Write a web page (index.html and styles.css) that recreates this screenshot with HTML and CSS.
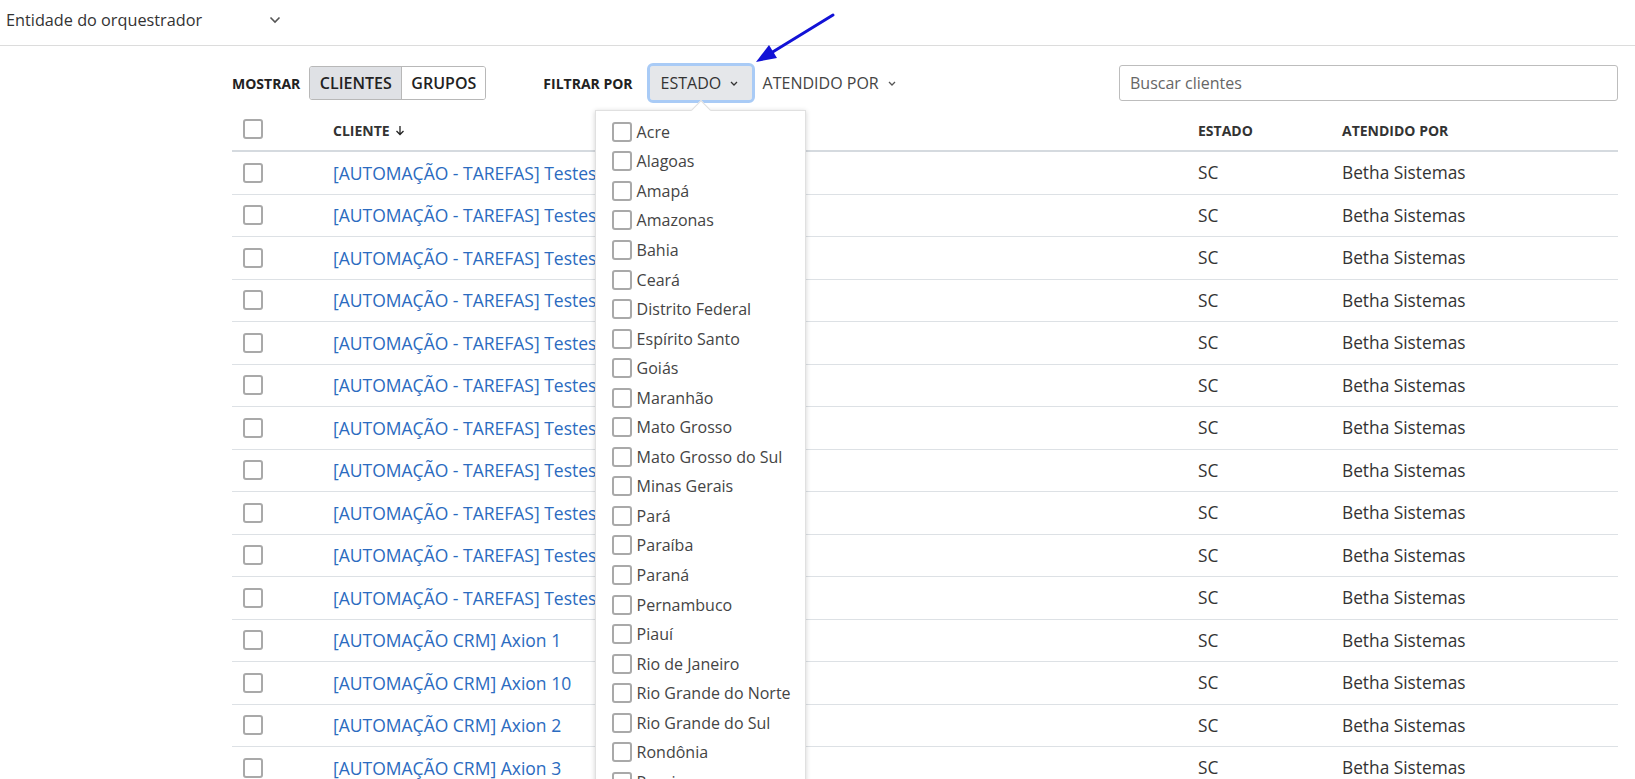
FILE: index.html
```html
<!DOCTYPE html>
<html lang="pt-BR">
<head>
<meta charset="utf-8">
<title>Clientes</title>
<link rel="stylesheet" href="styles.css">
</head>
<body>
<header class="topbar">
  <div class="entity">
    <span>Entidade do orquestrador</span>
    <svg class="chev-lg" width="12" height="8" viewBox="0 0 12 8"><path d="M1.5 1.5 L6 6 L10.5 1.5" fill="none" stroke="#555" stroke-width="1.6"/></svg>
  </div>
</header>
<main class="content">
  <div class="toolbar">
    <span class="label">MOSTRAR</span>
    <div class="seg">
      <button class="seg-btn active">CLIENTES</button>
      <button class="seg-btn second">GRUPOS</button>
    </div>
    <span class="label filter-label">FILTRAR POR</span>
    <div class="filter-wrap">
      <button class="filter open">ESTADO
        <svg width="8" height="5" viewBox="0 0 8 5"><path d="M1 1 L4 4 L7 1" fill="none" stroke="#333" stroke-width="1.3"/></svg>
      </button>
      <div class="dropdown">
        <div class="caret"></div>
        <ul class="opts">
          <li><span class="cb"></span>Acre</li>
          <li><span class="cb"></span>Alagoas</li>
          <li><span class="cb"></span>Amapá</li>
          <li><span class="cb"></span>Amazonas</li>
          <li><span class="cb"></span>Bahia</li>
          <li><span class="cb"></span>Ceará</li>
          <li><span class="cb"></span>Distrito Federal</li>
          <li><span class="cb"></span>Espírito Santo</li>
          <li><span class="cb"></span>Goiás</li>
          <li><span class="cb"></span>Maranhão</li>
          <li><span class="cb"></span>Mato Grosso</li>
          <li><span class="cb"></span>Mato Grosso do Sul</li>
          <li><span class="cb"></span>Minas Gerais</li>
          <li><span class="cb"></span>Pará</li>
          <li><span class="cb"></span>Paraíba</li>
          <li><span class="cb"></span>Paraná</li>
          <li><span class="cb"></span>Pernambuco</li>
          <li><span class="cb"></span>Piauí</li>
          <li><span class="cb"></span>Rio de Janeiro</li>
          <li><span class="cb"></span>Rio Grande do Norte</li>
          <li><span class="cb"></span>Rio Grande do Sul</li>
          <li><span class="cb"></span>Rondônia</li>
          <li><span class="cb"></span>Roraima</li>
          <li><span class="cb"></span>Santa Catarina</li>
          <li><span class="cb"></span>São Paulo</li>
          <li><span class="cb"></span>Sergipe</li>
          <li><span class="cb"></span>Tocantins</li>
        </ul>
      </div>
    </div>
    <button class="filter">ATENDIDO POR
      <svg width="8" height="5" viewBox="0 0 8 5"><path d="M1 1 L4 4 L7 1" fill="none" stroke="#555" stroke-width="1.3"/></svg>
    </button>
    <input class="search" type="text" placeholder="Buscar clientes">
  </div>

  <div class="table">
    <div class="row head">
      <div class="cell"><span class="cb"></span></div>
      <div class="cell th">CLIENTE
        <svg width="10" height="11" viewBox="0 0 10 11"><path d="M5 1 V9.5 M1.5 6 L5 9.5 L8.5 6" fill="none" stroke="#222" stroke-width="1.3"/></svg>
      </div>
      <div class="cell th">ESTADO</div>
      <div class="cell th">ATENDIDO POR</div>
    </div>
    <div class="row"><div class="cell"><span class="cb"></span></div><div class="cell"><a href="#">[AUTOMAÇÃO - TAREFAS] Testes 01</a></div><div class="cell">SC</div><div class="cell">Betha Sistemas</div></div>
    <div class="row"><div class="cell"><span class="cb"></span></div><div class="cell"><a href="#">[AUTOMAÇÃO - TAREFAS] Testes 02</a></div><div class="cell">SC</div><div class="cell">Betha Sistemas</div></div>
    <div class="row"><div class="cell"><span class="cb"></span></div><div class="cell"><a href="#">[AUTOMAÇÃO - TAREFAS] Testes 03</a></div><div class="cell">SC</div><div class="cell">Betha Sistemas</div></div>
    <div class="row"><div class="cell"><span class="cb"></span></div><div class="cell"><a href="#">[AUTOMAÇÃO - TAREFAS] Testes 04</a></div><div class="cell">SC</div><div class="cell">Betha Sistemas</div></div>
    <div class="row"><div class="cell"><span class="cb"></span></div><div class="cell"><a href="#">[AUTOMAÇÃO - TAREFAS] Testes 05</a></div><div class="cell">SC</div><div class="cell">Betha Sistemas</div></div>
    <div class="row"><div class="cell"><span class="cb"></span></div><div class="cell"><a href="#">[AUTOMAÇÃO - TAREFAS] Testes 06</a></div><div class="cell">SC</div><div class="cell">Betha Sistemas</div></div>
    <div class="row"><div class="cell"><span class="cb"></span></div><div class="cell"><a href="#">[AUTOMAÇÃO - TAREFAS] Testes 07</a></div><div class="cell">SC</div><div class="cell">Betha Sistemas</div></div>
    <div class="row"><div class="cell"><span class="cb"></span></div><div class="cell"><a href="#">[AUTOMAÇÃO - TAREFAS] Testes 08</a></div><div class="cell">SC</div><div class="cell">Betha Sistemas</div></div>
    <div class="row"><div class="cell"><span class="cb"></span></div><div class="cell"><a href="#">[AUTOMAÇÃO - TAREFAS] Testes 09</a></div><div class="cell">SC</div><div class="cell">Betha Sistemas</div></div>
    <div class="row"><div class="cell"><span class="cb"></span></div><div class="cell"><a href="#">[AUTOMAÇÃO - TAREFAS] Testes 10</a></div><div class="cell">SC</div><div class="cell">Betha Sistemas</div></div>
    <div class="row"><div class="cell"><span class="cb"></span></div><div class="cell"><a href="#">[AUTOMAÇÃO - TAREFAS] Testes 11</a></div><div class="cell">SC</div><div class="cell">Betha Sistemas</div></div>
    <div class="row"><div class="cell"><span class="cb"></span></div><div class="cell"><a href="#">[AUTOMAÇÃO CRM] Axion 1</a></div><div class="cell">SC</div><div class="cell">Betha Sistemas</div></div>
    <div class="row"><div class="cell"><span class="cb"></span></div><div class="cell"><a href="#">[AUTOMAÇÃO CRM] Axion 10</a></div><div class="cell">SC</div><div class="cell">Betha Sistemas</div></div>
    <div class="row"><div class="cell"><span class="cb"></span></div><div class="cell"><a href="#">[AUTOMAÇÃO CRM] Axion 2</a></div><div class="cell">SC</div><div class="cell">Betha Sistemas</div></div>
    <div class="row"><div class="cell"><span class="cb"></span></div><div class="cell"><a href="#">[AUTOMAÇÃO CRM] Axion 3</a></div><div class="cell">SC</div><div class="cell">Betha Sistemas</div></div>
    <div class="row"><div class="cell"><span class="cb"></span></div><div class="cell"><a href="#">[AUTOMAÇÃO CRM] Axion 4</a></div><div class="cell">SC</div><div class="cell">Betha Sistemas</div></div>
  </div>
</main>

<svg class="annotation" width="110" height="80" viewBox="740 0 110 80">
  <line x1="833" y1="15" x2="771" y2="53" stroke="#1212d6" stroke-width="3" stroke-linecap="round"/>
  <polygon points="756,62 777,58 769,45" fill="#1212d6"/>
</svg>
</body>
</html>
```

FILE: styles.css
```css
html, body {
  margin: 0;
  padding: 0;
  overflow: hidden;
  height: 100%;
}
body {
  font-family: "Open Sans", "Liberation Sans", sans-serif;
  color: #333;
  background: #fff;
  position: relative;
}

.topbar {
  height: 40px;
  padding-bottom: 5px;
  border-bottom: 1px solid #dcdcdc;
  display: flex;
  align-items: center;
  padding-left: 6px;
}
.entity {
  display: flex;
  align-items: center;
  font-size: 16.25px;
  color: #333;
}
.chev-lg {
  margin-left: 67px;
}

.content {
  padding: 0 17px 0 232px;
}

.toolbar {
  display: flex;
  align-items: center;
  height: 36px;
  margin-top: 19px;
}
.label {
  font-size: 14px;
  font-weight: 700;
  color: #222;
}
.filter-label {
  margin-left: 57px;
}
.seg {
  display: flex;
  margin-left: 9px;
  border: 1px solid #b8b8b8;
  border-radius: 3px;
  height: 34px;
  box-sizing: border-box;
  overflow: hidden;
}
.seg-btn {
  font-family: inherit;
  font-size: 16px;
  font-weight: 600;
  color: #222;
  border: 0;
  background: #fff;
  padding: 0;
  margin: 0;
  box-sizing: border-box;
  text-align: center;
}
.seg-btn.active {
  background: #dfe1e5;
  border-right: 1px solid #b8b8b8;
  width: 92px;
}
.seg-btn.second {
  width: 83px;
}
.filter-wrap {
  position: relative;
  margin-left: 17px;
}
.filter {
  font-family: inherit;
  font-size: 16px;
  color: #444;
  background: transparent;
  border: 0;
  height: 34px;
  padding: 0 11px;
  display: flex;
  align-items: center;
  gap: 9px;
  border-radius: 3px;
}
.filter.open {
  background: #e5e7ea;
  color: #333;
  width: 102px;
  outline: 3px solid #a9cbf6;
  outline-offset: 0;
}
.filter svg {
  margin-top: 1px;
}

.dropdown {
  position: absolute;
  left: -55px;
  top: calc(100% + 10px);
  width: 211px;
  box-sizing: border-box;
  background: #fff;
  border: 1px solid #e0e0e0;
  box-shadow: 0 1px 5px rgba(0, 0, 0, 0.18);
  z-index: 5;
}
.caret {
  position: absolute;
  top: -8px;
  left: 98px;
  width: 13px;
  height: 13px;
  background: #fff;
  border-left: 1px solid #dedede;
  border-top: 1px solid #dedede;
  transform: rotate(45deg);
}
.opts {
  list-style: none;
  margin: 0;
  padding: 6px 0 0 16px;
}
.opts li {
  height: 29.55px;
  display: flex;
  align-items: center;
  gap: 5px;
  font-size: 16px;
  color: #444;
  white-space: nowrap;
}

.search {
  margin-left: auto;
  width: 499px;
  height: 36px;
  box-sizing: border-box;
  border: 1px solid #bdbdbd;
  border-radius: 3px;
  padding: 0 10px;
  font-family: inherit;
  font-size: 16px;
  color: #333;
}
.search::placeholder {
  color: #666;
}

.cb {
  display: inline-block;
  width: 20px;
  height: 20px;
  box-sizing: border-box;
  border: 2px solid #a9a9a9;
  border-radius: 3px;
  background: #fff;
  flex: none;
}

.table {
  width: 100%;
}
.row {
  display: grid;
  grid-template-columns: 101px 865px 144px 1fr;
  align-items: center;
  height: 42.5px;
  box-sizing: border-box;
  border-bottom: 1px solid #dde1e5;
  font-size: 17.3px;
}
.row .cell:first-child {
  padding-left: 11px;
  display: flex;
  align-items: center;
}
.row.head {
  height: auto;
  padding: 16px 0 10px;
  border-bottom: 2px solid #d5dadf;
}
.th {
  font-size: 14px;
  font-weight: 700;
  color: #222;
  padding-top: 4px;
  display: flex;
  align-items: center;
  gap: 5px;
}
.row a {
  color: #2b6bc0;
  text-decoration: none;
  white-space: nowrap;
  font-size: 17.5px;
}
.cell {
  color: #333;
}

.annotation {
  position: absolute;
  left: 740px;
  top: 0;
  z-index: 10;
}
```
